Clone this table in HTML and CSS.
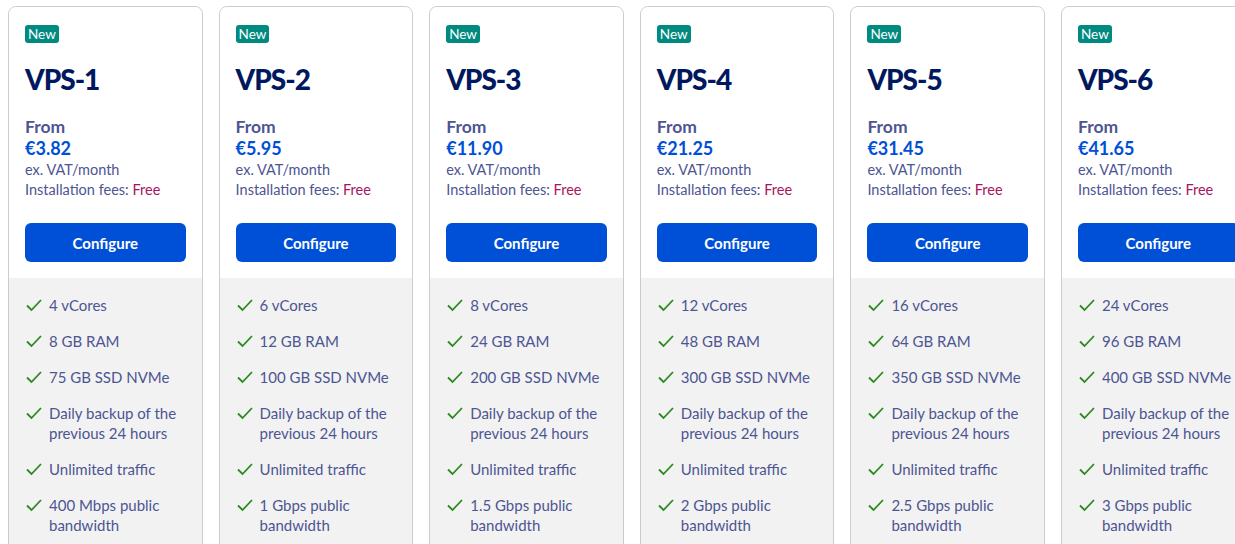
FILE: index.html
```html
<!DOCTYPE html>
<html lang="en">
<head>
<meta charset="utf-8">
<title>VPS plans</title>
<link rel="stylesheet" href="styles.css">
</head>
<body>
<div class="plans">
  <div class="card">
    <div class="card-top">
      <span class="badge">New</span>
      <h2 class="title">VPS-1</h2>
      <div class="from">From</div>
      <div class="price">€3.82</div>
      <div class="note">ex. VAT/month</div>
      <div class="note">Installation fees: <span class="free">Free</span></div>
      <button class="btn">Configure</button>
    </div>
    <ul class="features">
      <li><svg class="check" viewBox="0 0 18 14"><path d="M2 7.5 L6.5 12 L16 2"/></svg><span>4 vCores</span></li>
      <li><svg class="check" viewBox="0 0 18 14"><path d="M2 7.5 L6.5 12 L16 2"/></svg><span>8 GB RAM</span></li>
      <li><svg class="check" viewBox="0 0 18 14"><path d="M2 7.5 L6.5 12 L16 2"/></svg><span>75 GB SSD NVMe</span></li>
      <li><svg class="check" viewBox="0 0 18 14"><path d="M2 7.5 L6.5 12 L16 2"/></svg><span>Daily backup of the previous 24 hours</span></li>
      <li><svg class="check" viewBox="0 0 18 14"><path d="M2 7.5 L6.5 12 L16 2"/></svg><span>Unlimited traffic</span></li>
      <li><svg class="check" viewBox="0 0 18 14"><path d="M2 7.5 L6.5 12 L16 2"/></svg><span>400 Mbps public bandwidth</span></li>
    </ul>
  </div>
  <div class="card">
    <div class="card-top">
      <span class="badge">New</span>
      <h2 class="title">VPS-2</h2>
      <div class="from">From</div>
      <div class="price">€5.95</div>
      <div class="note">ex. VAT/month</div>
      <div class="note">Installation fees: <span class="free">Free</span></div>
      <button class="btn">Configure</button>
    </div>
    <ul class="features">
      <li><svg class="check" viewBox="0 0 18 14"><path d="M2 7.5 L6.5 12 L16 2"/></svg><span>6 vCores</span></li>
      <li><svg class="check" viewBox="0 0 18 14"><path d="M2 7.5 L6.5 12 L16 2"/></svg><span>12 GB RAM</span></li>
      <li><svg class="check" viewBox="0 0 18 14"><path d="M2 7.5 L6.5 12 L16 2"/></svg><span>100 GB SSD NVMe</span></li>
      <li><svg class="check" viewBox="0 0 18 14"><path d="M2 7.5 L6.5 12 L16 2"/></svg><span>Daily backup of the previous 24 hours</span></li>
      <li><svg class="check" viewBox="0 0 18 14"><path d="M2 7.5 L6.5 12 L16 2"/></svg><span>Unlimited traffic</span></li>
      <li><svg class="check" viewBox="0 0 18 14"><path d="M2 7.5 L6.5 12 L16 2"/></svg><span>1 Gbps public bandwidth</span></li>
    </ul>
  </div>
  <div class="card">
    <div class="card-top">
      <span class="badge">New</span>
      <h2 class="title">VPS-3</h2>
      <div class="from">From</div>
      <div class="price">€11.90</div>
      <div class="note">ex. VAT/month</div>
      <div class="note">Installation fees: <span class="free">Free</span></div>
      <button class="btn">Configure</button>
    </div>
    <ul class="features">
      <li><svg class="check" viewBox="0 0 18 14"><path d="M2 7.5 L6.5 12 L16 2"/></svg><span>8 vCores</span></li>
      <li><svg class="check" viewBox="0 0 18 14"><path d="M2 7.5 L6.5 12 L16 2"/></svg><span>24 GB RAM</span></li>
      <li><svg class="check" viewBox="0 0 18 14"><path d="M2 7.5 L6.5 12 L16 2"/></svg><span>200 GB SSD NVMe</span></li>
      <li><svg class="check" viewBox="0 0 18 14"><path d="M2 7.5 L6.5 12 L16 2"/></svg><span>Daily backup of the previous 24 hours</span></li>
      <li><svg class="check" viewBox="0 0 18 14"><path d="M2 7.5 L6.5 12 L16 2"/></svg><span>Unlimited traffic</span></li>
      <li><svg class="check" viewBox="0 0 18 14"><path d="M2 7.5 L6.5 12 L16 2"/></svg><span>1.5 Gbps public bandwidth</span></li>
    </ul>
  </div>
  <div class="card">
    <div class="card-top">
      <span class="badge">New</span>
      <h2 class="title">VPS-4</h2>
      <div class="from">From</div>
      <div class="price">€21.25</div>
      <div class="note">ex. VAT/month</div>
      <div class="note">Installation fees: <span class="free">Free</span></div>
      <button class="btn">Configure</button>
    </div>
    <ul class="features">
      <li><svg class="check" viewBox="0 0 18 14"><path d="M2 7.5 L6.5 12 L16 2"/></svg><span>12 vCores</span></li>
      <li><svg class="check" viewBox="0 0 18 14"><path d="M2 7.5 L6.5 12 L16 2"/></svg><span>48 GB RAM</span></li>
      <li><svg class="check" viewBox="0 0 18 14"><path d="M2 7.5 L6.5 12 L16 2"/></svg><span>300 GB SSD NVMe</span></li>
      <li><svg class="check" viewBox="0 0 18 14"><path d="M2 7.5 L6.5 12 L16 2"/></svg><span>Daily backup of the previous 24 hours</span></li>
      <li><svg class="check" viewBox="0 0 18 14"><path d="M2 7.5 L6.5 12 L16 2"/></svg><span>Unlimited traffic</span></li>
      <li><svg class="check" viewBox="0 0 18 14"><path d="M2 7.5 L6.5 12 L16 2"/></svg><span>2 Gbps public bandwidth</span></li>
    </ul>
  </div>
  <div class="card">
    <div class="card-top">
      <span class="badge">New</span>
      <h2 class="title">VPS-5</h2>
      <div class="from">From</div>
      <div class="price">€31.45</div>
      <div class="note">ex. VAT/month</div>
      <div class="note">Installation fees: <span class="free">Free</span></div>
      <button class="btn">Configure</button>
    </div>
    <ul class="features">
      <li><svg class="check" viewBox="0 0 18 14"><path d="M2 7.5 L6.5 12 L16 2"/></svg><span>16 vCores</span></li>
      <li><svg class="check" viewBox="0 0 18 14"><path d="M2 7.5 L6.5 12 L16 2"/></svg><span>64 GB RAM</span></li>
      <li><svg class="check" viewBox="0 0 18 14"><path d="M2 7.5 L6.5 12 L16 2"/></svg><span>350 GB SSD NVMe</span></li>
      <li><svg class="check" viewBox="0 0 18 14"><path d="M2 7.5 L6.5 12 L16 2"/></svg><span>Daily backup of the previous 24 hours</span></li>
      <li><svg class="check" viewBox="0 0 18 14"><path d="M2 7.5 L6.5 12 L16 2"/></svg><span>Unlimited traffic</span></li>
      <li><svg class="check" viewBox="0 0 18 14"><path d="M2 7.5 L6.5 12 L16 2"/></svg><span>2.5 Gbps public bandwidth</span></li>
    </ul>
  </div>
  <div class="card">
    <div class="card-top">
      <span class="badge">New</span>
      <h2 class="title">VPS-6</h2>
      <div class="from">From</div>
      <div class="price">€41.65</div>
      <div class="note">ex. VAT/month</div>
      <div class="note">Installation fees: <span class="free">Free</span></div>
      <button class="btn">Configure</button>
    </div>
    <ul class="features">
      <li><svg class="check" viewBox="0 0 18 14"><path d="M2 7.5 L6.5 12 L16 2"/></svg><span>24 vCores</span></li>
      <li><svg class="check" viewBox="0 0 18 14"><path d="M2 7.5 L6.5 12 L16 2"/></svg><span>96 GB RAM</span></li>
      <li><svg class="check" viewBox="0 0 18 14"><path d="M2 7.5 L6.5 12 L16 2"/></svg><span>400 GB SSD NVMe</span></li>
      <li><svg class="check" viewBox="0 0 18 14"><path d="M2 7.5 L6.5 12 L16 2"/></svg><span>Daily backup of the previous 24 hours</span></li>
      <li><svg class="check" viewBox="0 0 18 14"><path d="M2 7.5 L6.5 12 L16 2"/></svg><span>Unlimited traffic</span></li>
      <li><svg class="check" viewBox="0 0 18 14"><path d="M2 7.5 L6.5 12 L16 2"/></svg><span>3 Gbps public bandwidth</span></li>
    </ul>
  </div>
</div>
</body>
</html>
```

FILE: styles.css
```css
html, body {
  margin: 0;
  padding: 0;
  overflow: hidden;
  background: #ffffff;
}

body {
  font-family: Lato, "Noto Sans", sans-serif;
  color: #4d5592;
}

.plans {
  display: flex;
  gap: 16px;
  padding: 6px 0 0 8px;
  width: max-content;
}

.card {
  flex: 0 0 194.6px;
  box-sizing: border-box;
  border: 1px solid #cccccc;
  border-radius: 8px;
  overflow: hidden;
  height: 600px;
  background: #f2f2f2;
}

.card-top {
  background: #ffffff;
  padding: 18px 16px 16px;
  display: flex;
  flex-direction: column;
  align-items: flex-start;
}

.badge {
  display: inline-block;
  background: #008a80;
  color: #ffffff;
  font-size: 13.5px;
  line-height: 18px;
  height: 18px;
  padding: 0 3px;
  border-radius: 3px;
}

.title {
  margin: 18px 0 0;
  font-size: 28px;
  line-height: 36px;
  font-weight: 900;
  letter-spacing: -1px;
  color: #00185e;
}

.from {
  margin-top: 19px;
  font-size: 17.5px;
  line-height: 22px;
  font-weight: 700;
  color: #4d5592;
}

.price {
  font-size: 18px;
  line-height: 20px;
  font-weight: 700;
  color: #0050d7;
}

.note {
  font-size: 14.5px;
  line-height: 20px;
  color: #4d5592;
}

.price + .note {
  margin-top: 2px;
}

.free {
  color: #a8155e;
  font-weight: 400;
}

.btn {
  margin-top: 23px;
  width: 100%;
  height: 39px;
  border: none;
  border-radius: 6px;
  background: #0050d7;
  color: #ffffff;
  font-family: inherit;
  font-size: 15px;
  font-weight: 700;
  cursor: pointer;
}

.features {
  list-style: none;
  margin: 0;
  padding: 17px 16px 0;
  display: flex;
  flex-direction: column;
  gap: 16px;
}

.features li {
  display: flex;
  align-items: flex-start;
  gap: 6px;
  font-size: 15px;
  line-height: 20px;
  color: #4d5592;
}

.check {
  flex: 0 0 18px;
  width: 18px;
  height: 14px;
  margin-top: 3px;
  fill: none;
  stroke: #2a8a1f;
  stroke-width: 1.8;
}
```
